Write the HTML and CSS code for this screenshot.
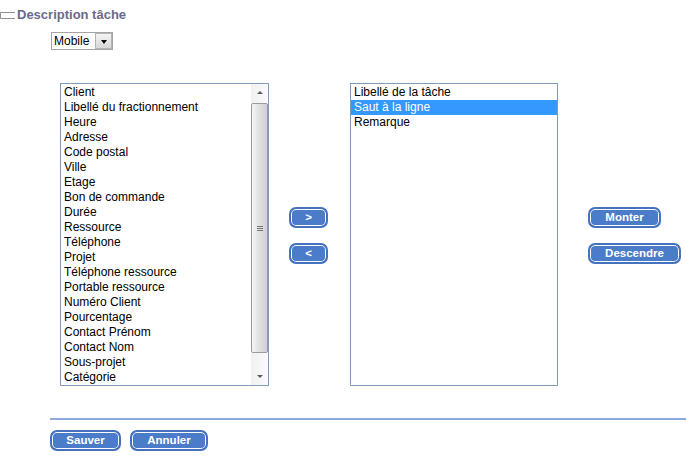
FILE: index.html
```html
<!DOCTYPE html>
<html lang="fr">
<head>
<meta charset="utf-8">
<title>Description tâche</title>
<link rel="stylesheet" href="styles.css">
</head>
<body>
<div class="title">
  <svg class="title-icon" width="16" height="12" viewBox="0 0 16 12"><path d="M15 2.5H0.5V8.5H15" fill="none" stroke="#8d8d98" stroke-width="1"/></svg>
  <span class="title-text">Description tâche</span>
</div>
<div class="select-row">
  <div class="select">
    <span class="select-value">Mobile</span>
    <span class="select-btn"><span class="tri-down"></span></span>
  </div>
</div>
<div class="main">
  <div class="list list-left">
    <div class="items">
      <div class="item">Client</div>
      <div class="item">Libellé du fractionnement</div>
      <div class="item">Heure</div>
      <div class="item">Adresse</div>
      <div class="item">Code postal</div>
      <div class="item">Ville</div>
      <div class="item">Etage</div>
      <div class="item">Bon de commande</div>
      <div class="item">Durée</div>
      <div class="item">Ressource</div>
      <div class="item">Téléphone</div>
      <div class="item">Projet</div>
      <div class="item">Téléphone ressource</div>
      <div class="item">Portable ressource</div>
      <div class="item">Numéro Client</div>
      <div class="item">Pourcentage</div>
      <div class="item">Contact Prénom</div>
      <div class="item">Contact Nom</div>
      <div class="item">Sous-projet</div>
      <div class="item">Catégorie</div>
    </div>
    <div class="scrollbar">
      <div class="sb-arrow"><span class="sb-up"></span></div>
      <div class="sb-thumb"><span class="grip"></span></div>
      <div class="sb-track"></div>
      <div class="sb-arrow"><span class="sb-down"></span></div>
    </div>
  </div>
  <div class="btn-col mid">
    <button class="btn btn-sm">&gt;</button>
    <button class="btn btn-sm">&lt;</button>
  </div>
  <div class="list list-right">
    <div class="items">
      <div class="item">Libellé de la tâche</div>
      <div class="item selected">Saut à la ligne</div>
      <div class="item">Remarque</div>
    </div>
  </div>
  <div class="btn-col right">
    <button class="btn btn-monter">Monter</button>
    <button class="btn btn-desc">Descendre</button>
  </div>
</div>
<div class="sep"></div>
<div class="actions">
  <button class="btn btn-save">Sauver</button>
  <button class="btn btn-cancel">Annuler</button>
</div>
</body>
</html>
```
FILE: styles.css
```css
* { box-sizing: border-box; }
html, body { margin: 0; padding: 0; background: #fff; }
body {
  width: 686px;
  height: 458px;
  overflow: hidden;
  font-family: "Liberation Sans", Arial, sans-serif;
  color: #000;
}
.title {
  display: flex;
  align-items: center;
  height: 16px;
  margin-top: 7px;
}
.title-icon { display: block; margin-right: 1px; margin-top: 1px; }
.title-text {
  font-size: 13px;
  font-weight: bold;
  line-height: 16px;
  color: #6b6a8c;
}
.select-row {
  margin-top: 9px;
  padding-left: 51px;
}
.select {
  display: flex;
  width: 62px;
  height: 18px;
  border: 1px solid #a5a5a8;
  background: #fff;
}
.select-value {
  flex: 1;
  font-size: 12px;
  line-height: 17px;
  padding-left: 2px;
}
.select-btn {
  width: 17px;
  height: 16px;
  border: 1px solid #b4b4b4;
  background: linear-gradient(#f4f4f4, #d8d8d8);
  display: flex;
  align-items: center;
  justify-content: center;
}
.tri-down {
  width: 0; height: 0;
  border-left: 3.5px solid transparent;
  border-right: 3.5px solid transparent;
  border-top: 4px solid #000;
  margin-top: 1px;
}
.main {
  display: flex;
  align-items: flex-start;
  margin-top: 33px;
  padding-left: 60px;
}
.list {
  height: 303px;
  border: 1px solid #7f9db9;
  background: #fff;
  display: flex;
}
.list-left { width: 209px; }
.list-right { width: 208px; }
.items { flex: 1; padding-top: 1px; }
.item {
  height: 15px;
  line-height: 15px;
  font-size: 12px;
  padding-left: 3px;
  white-space: nowrap;
}
.item.selected { background: #3399ff; color: #fff; }
.scrollbar {
  width: 17px;
  display: flex;
  flex-direction: column;
  background: linear-gradient(to right, #f0f0f0, #fbfbfb);
}
.sb-arrow {
  height: 17px;
  display: flex;
  align-items: center;
  justify-content: center;
}
.sb-up, .sb-down {
  width: 0; height: 0;
  border-left: 3px solid transparent;
  border-right: 3px solid transparent;
}
.sb-up { border-bottom: 3px solid #5a5a5a; }
.sb-down { border-top: 3px solid #5a5a5a; }
.sb-thumb {
  margin-top: 2px;
  height: 250px;
  border: 1px solid #9a9a9a;
  border-radius: 2px;
  background: linear-gradient(to right, #f6f6f6, #e2e2e2 45%, #cfcfcf);
  display: flex;
  align-items: center;
  justify-content: center;
}
.grip {
  width: 6px;
  height: 5px;
  border-top: 1px solid #777;
  border-bottom: 1px solid #777;
  position: relative;
}
.grip::after {
  content: "";
  position: absolute;
  left: 0; right: 0; top: 1px;
  border-top: 1px solid #777;
}
.sb-track { flex: 1; }
.btn-col {
  display: flex;
  flex-direction: column;
  align-items: flex-start;
  gap: 15px;
  padding-top: 124px;
}
.mid { margin-left: 20px; margin-right: 22px; }
.right { margin-left: 30px; }
.btn {
  height: 21px;
  padding: 0;
  border: 2px solid #4472be;
  border-radius: 7px;
  box-shadow: inset 0 0 0 1px #fff;
  background: #4b7cc9;
  color: #fff;
  font-family: "Liberation Sans", Arial, sans-serif;
  font-size: 11.5px;
  font-weight: bold;
  line-height: 17px;
  text-align: center;
  cursor: pointer;
}
.btn-sm { width: 39px; }
.btn-monter { width: 73px; }
.btn-desc { width: 93px; }
.sep {
  margin-top: 32px;
  margin-left: 50px;
  height: 2px;
  background: #8eaadc;
}
.actions {
  display: flex;
  gap: 9px;
  margin-top: 10px;
  padding-left: 50px;
}
.btn-save { width: 71px; }
.btn-cancel { width: 78px; }
```
